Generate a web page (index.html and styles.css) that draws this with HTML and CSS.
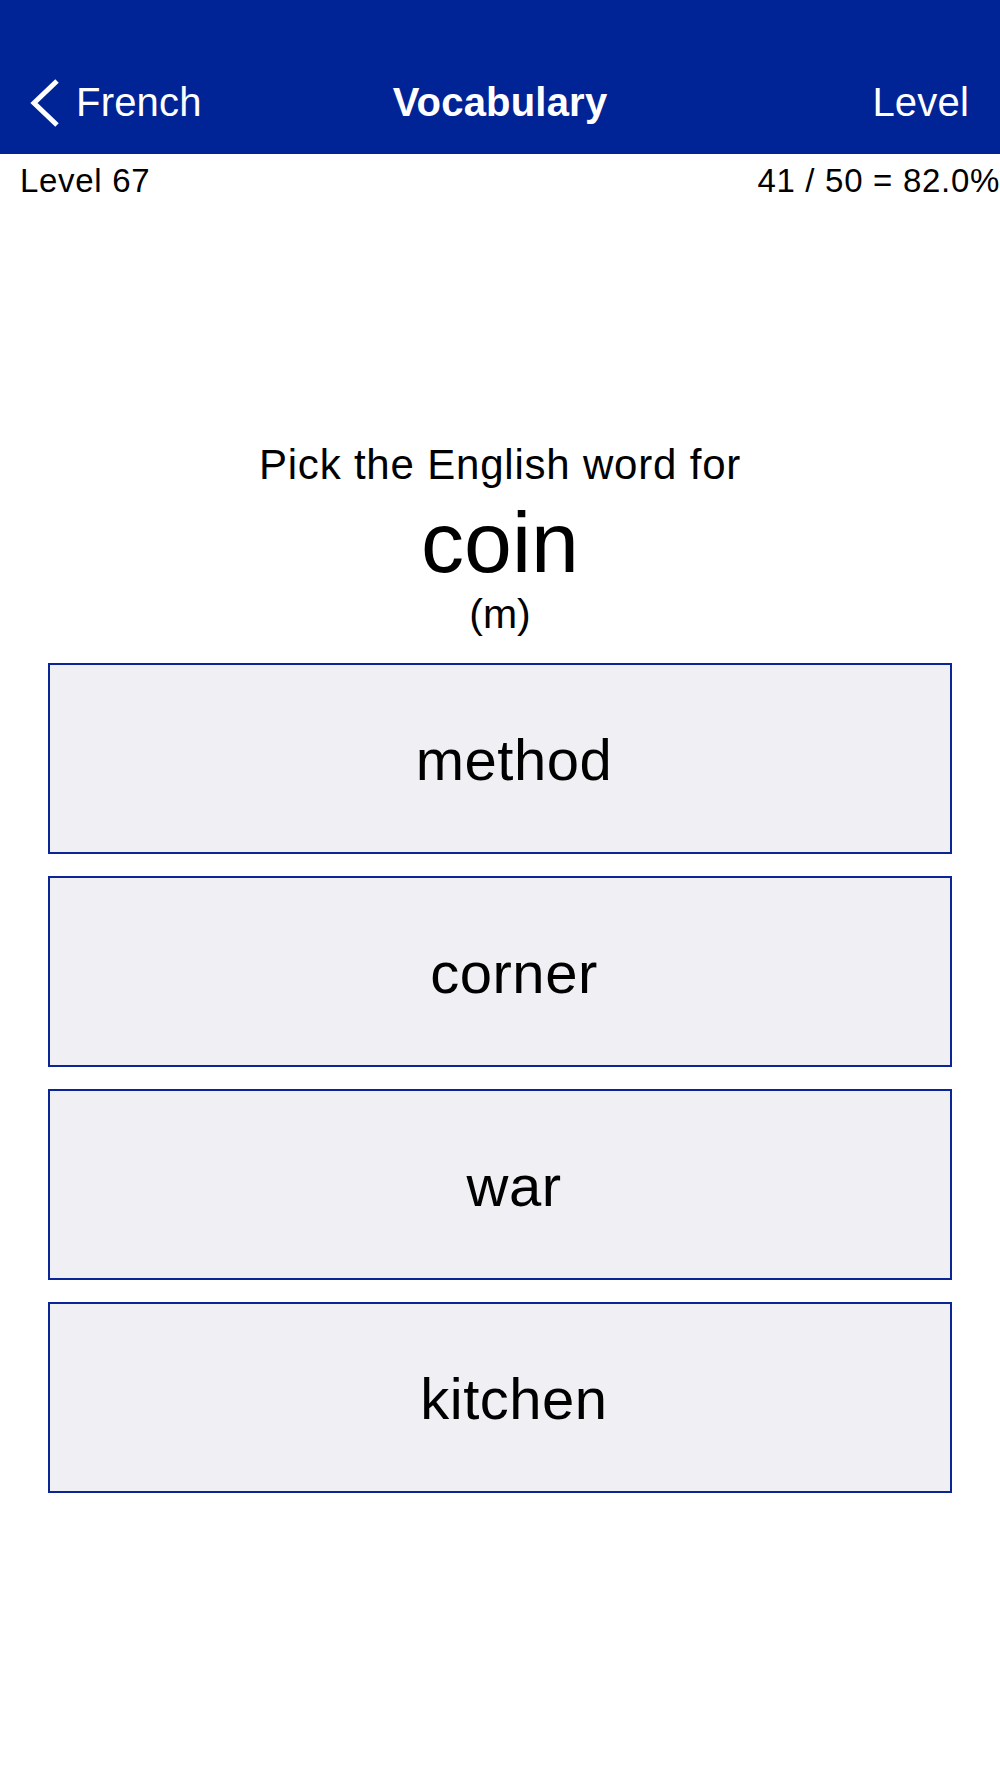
FILE: index.html
```html
<!DOCTYPE html>
<html lang="en">
<head>
<meta charset="utf-8">
<title>Vocabulary</title>
<link rel="stylesheet" href="styles.css">
</head>
<body>
<header class="navbar">
  <div class="nav-row">
    <div class="nav-back">
      <svg class="chevron" width="30" height="50" viewBox="0 0 30 50" aria-hidden="true">
        <polyline points="27,3 4,25 27,47" fill="none" stroke="#ffffff" stroke-width="5" stroke-linecap="butt" stroke-linejoin="miter"/>
      </svg>
      <span class="nav-back-label">French</span>
    </div>
    <div class="nav-title">Vocabulary</div>
    <div class="nav-action">Level</div>
  </div>
</header>
<div class="stats">
  <span class="stats-level">Level 67</span>
  <span class="stats-score">41 / 50 = 82.0%</span>
</div>
<main class="quiz">
  <div class="prompt">Pick the English word for</div>
  <div class="word">coin</div>
  <div class="gender">(m)</div>
  <div class="options">
    <div class="option"><span class="option-label">method</span></div>
    <div class="option"><span class="option-label">corner</span></div>
    <div class="option"><span class="option-label">war</span></div>
    <div class="option"><span class="option-label">kitchen</span></div>
  </div>
</main>
</body>
</html>
```
FILE: styles.css
```css
html, body {
  margin: 0;
  padding: 0;
  background: #ffffff;
}
body {
  font-family: "Liberation Sans", Arial, sans-serif;
  color: #000000;
}
.navbar {
  background: #002496;
  height: 154px;
  box-sizing: border-box;
  padding-top: 78px;
  color: #ffffff;
}
.nav-row {
  position: relative;
  display: flex;
  align-items: center;
  justify-content: space-between;
  height: 48px;
  padding: 0 31px 0 30px;
  font-size: 40px;
  line-height: 48px;
  letter-spacing: 0.2px;
}
.nav-back {
  display: flex;
  align-items: center;
  gap: 16px;
}
.chevron {
  display: block;
  margin-top: 2px;
}
.nav-title {
  position: absolute;
  left: 0;
  right: 0;
  text-align: center;
  font-weight: bold;
  pointer-events: none;
}
.nav-action {
  text-align: right;
}
.stats {
  display: flex;
  justify-content: space-between;
  margin-top: 7px;
  padding: 0 0 0 20px;
  font-size: 33px;
  line-height: 40px;
  letter-spacing: 0.7px;
}
.quiz {
  display: flex;
  flex-direction: column;
  align-items: center;
  margin-top: 239px;
}
.prompt {
  font-size: 42px;
  line-height: 50px;
  letter-spacing: 0.8px;
}
.word {
  font-size: 86px;
  line-height: 96px;
  margin-top: 4px;
}
.gender {
  font-size: 41px;
  line-height: 48px;
}
.options {
  align-self: stretch;
  display: flex;
  flex-direction: column;
  gap: 22px;
  margin: 25px 48px 0 48px;
}
.option {
  height: 191px;
  box-sizing: border-box;
  border: 2px solid #0b2596;
  background: #efeff4;
  display: flex;
  align-items: center;
  justify-content: center;
  padding: 2px 0 0 28px;
}
.option-label {
  font-size: 58px;
  line-height: 58px;
  letter-spacing: 0.5px;
}
```
